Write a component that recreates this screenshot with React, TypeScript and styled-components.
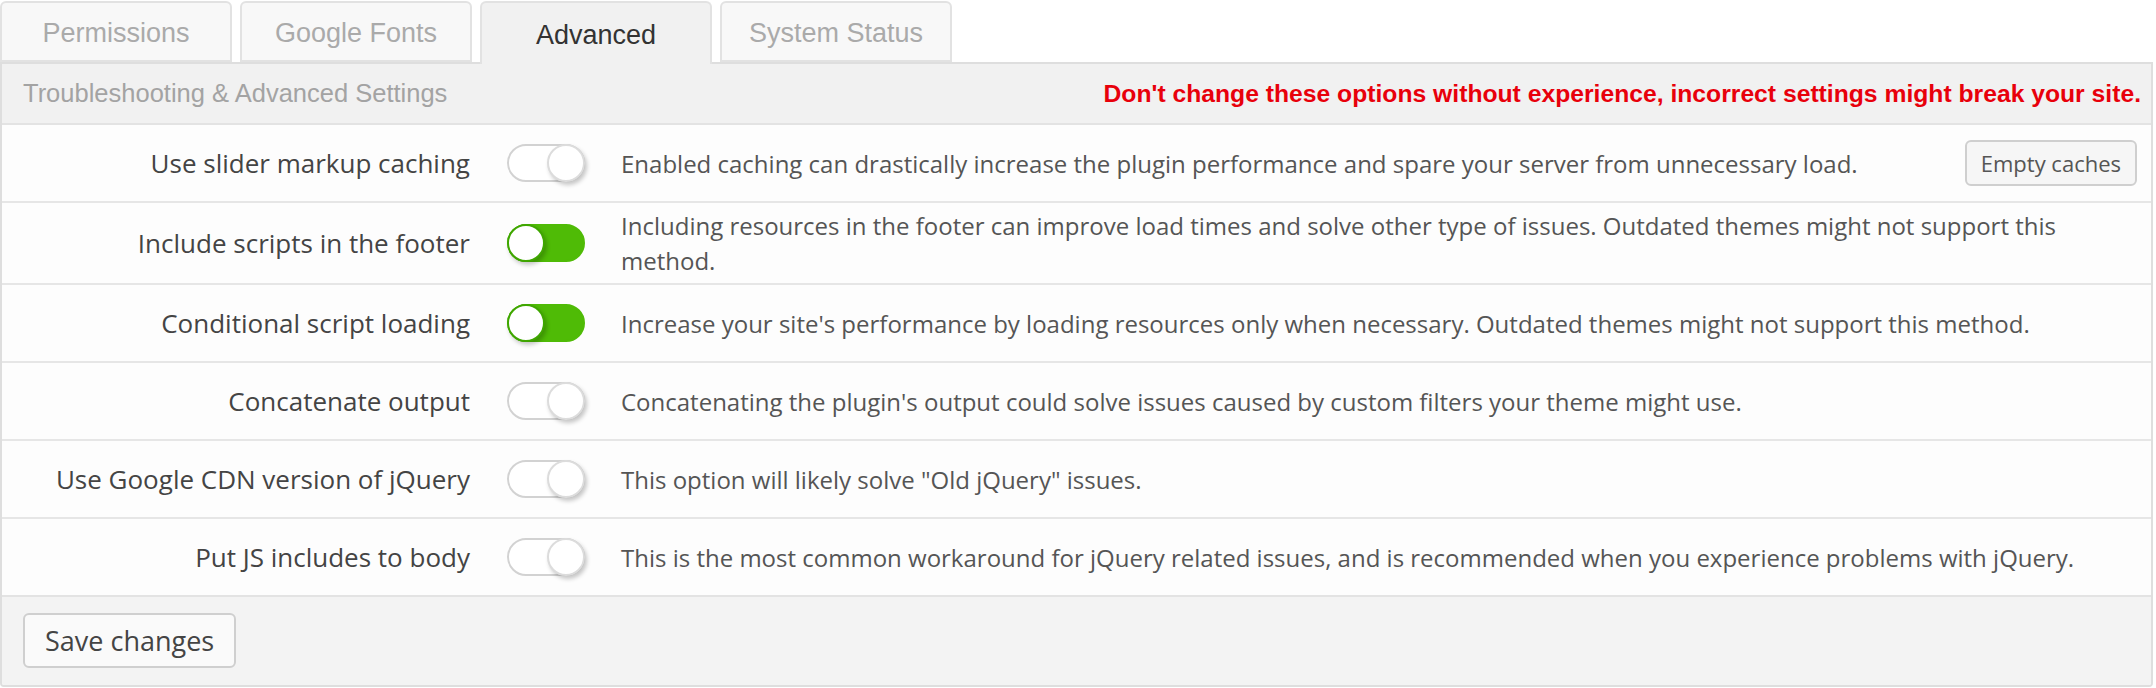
import React from 'react';
import styled, { createGlobalStyle } from 'styled-components';

const GlobalStyle = createGlobalStyle`
  html, body {
    margin: 0;
    padding: 0;
    background: #ffffff;
  }
`;

const Page = styled.div`
  width: 2153px;
  padding-top: 1px;
  font-family: 'Open Sans', 'Liberation Sans', sans-serif;
`;

const Tabs = styled.div`
  display: flex;
  gap: 8px;
  position: relative;
  z-index: 1;
`;

const Tab = styled.div<{ active?: boolean }>`
  width: 232px;
  height: ${p => (p.active ? '63px' : '61px')};
  box-sizing: border-box;
  display: flex;
  align-items: center;
  justify-content: center;
  border: 2px solid #e2e2e2;
  border-bottom: ${p => (p.active ? 'none' : '2px solid #e2e2e2')};
  border-radius: 6px 6px 0 0;
  background: ${p => (p.active ? '#f1f1f1' : '#f8f8f8')};
  color: ${p => (p.active ? '#333' : '#aaa')};
  font-family: 'Liberation Sans', Arial, sans-serif;
  font-size: 27px;
  padding-top: 3px;
`;

const Panel = styled.div`
  border: 2px solid #dedede;
  border-radius: 0 0 4px 4px;
  margin-top: -2px;
  overflow: hidden;
`;

const Header = styled.div`
  height: 59px;
  display: flex;
  align-items: center;
  justify-content: space-between;
  padding: 0 10px 0 21px;
  background: #f1f1f1;
  border-bottom: 2px solid #e3e3e3;
  font-family: 'Liberation Sans', Arial, sans-serif;
`;

const HeaderTitle = styled.span`
  color: #a3a3a3;
  font-size: 25.5px;
`;

const Warning = styled.span`
  color: #e8000b;
  font-size: 24.7px;
  font-weight: bold;
`;

const Row = styled.div`
  display: flex;
  align-items: center;
  min-height: 76px;
  background: #fdfdfd;
  & + & {
    border-top: 2px solid #e6e6e6;
  }
`;

const Label = styled.div`
  width: 468px;
  flex-shrink: 0;
  text-align: right;
  color: #444;
  font-size: 26px;
`;

const ToggleCell = styled.div`
  padding: 0 36px 0 37px;
  display: flex;
  align-items: center;
`;

const Track = styled.div<{ on?: boolean }>`
  width: 78px;
  height: 38px;
  box-sizing: border-box;
  border-radius: 19px;
  border: 2px solid ${p => (p.on ? '#4fbb06' : '#d2d2d2')};
  background: ${p => (p.on ? '#4fbb06' : '#ffffff')};
  display: flex;
  justify-content: ${p => (p.on ? 'flex-start' : 'flex-end')};
  align-items: center;
`;

const Knob = styled.div<{ on?: boolean }>`
  width: 38px;
  height: 38px;
  margin: ${p => (p.on ? '0 0 0 -2px' : '0 -2px 0 0')};
  box-sizing: border-box;
  border-radius: 50%;
  background: #fff;
  border: 2px solid ${p => (p.on ? '#3fa600' : '#dcdcdc')};
  box-shadow: 2px 3px 4px rgba(0, 0, 0, 0.22);
`;

const Desc = styled.div`
  flex: 1;
  display: flex;
  align-items: center;
  padding: 5px 14px 5px 0;
  color: #555;
  font-size: 24px;
  line-height: 35px;
`;

const DescText = styled.div`
  flex: 1;
`;

const SmallButton = styled.button`
  height: 46px;
  padding: 0 14px;
  margin-left: 20px;
  border: 2px solid #cfcfcf;
  border-radius: 6px;
  background: #f6f6f6;
  color: #555;
  font-family: 'Open Sans', sans-serif;
  font-size: 22px;
`;

const Footer = styled.div`
  background: #f3f3f3;
  border-top: 2px solid #e3e3e3;
  padding: 16px 21px 17px;
`;

const SaveButton = styled.button`
  height: 55px;
  padding: 0 20px;
  border: 2px solid #cfcfcf;
  border-radius: 6px;
  background: #fafafa;
  color: #444;
  font-family: 'Open Sans', sans-serif;
  font-size: 27px;
`;

const Toggle: React.FC<{ on?: boolean }> = ({ on }) => (
  <Track on={on}>
    <Knob on={on} />
  </Track>
);

const settings = [
  {
    label: 'Use slider markup caching',
    on: false,
    desc: 'Enabled caching can drastically increase the plugin performance and spare your server from unnecessary load.',
    button: 'Empty caches',
  },
  {
    label: 'Include scripts in the footer',
    on: true,
    desc: 'Including resources in the footer can improve load times and solve other type of issues. Outdated themes might not support this method.',
  },
  {
    label: 'Conditional script loading',
    on: true,
    desc: 'Increase your site\'s performance by loading resources only when necessary. Outdated themes might not support this method.',
  },
  {
    label: 'Concatenate output',
    on: false,
    desc: 'Concatenating the plugin\'s output could solve issues caused by custom filters your theme might use.',
  },
  {
    label: 'Use Google CDN version of jQuery',
    on: false,
    desc: 'This option will likely solve "Old jQuery" issues.',
  },
  {
    label: 'Put JS includes to body',
    on: false,
    desc: 'This is the most common workaround for jQuery related issues, and is recommended when you experience problems with jQuery.',
  },
];

const App: React.FC = () => {
  return (
    <Page>
      <GlobalStyle />
      <Tabs>
        <Tab>Permissions</Tab>
        <Tab>Google Fonts</Tab>
        <Tab active>Advanced</Tab>
        <Tab>System Status</Tab>
      </Tabs>
      <Panel>
        <Header>
          <HeaderTitle>Troubleshooting &amp; Advanced Settings</HeaderTitle>
          <Warning>Don't change these options without experience, incorrect settings might break your site.</Warning>
        </Header>
        {settings.map(s => (
          <Row key={s.label}>
            <Label>{s.label}</Label>
            <ToggleCell>
              <Toggle on={s.on} />
            </ToggleCell>
            <Desc>
              <DescText>{s.desc}</DescText>
              {s.button && <SmallButton>{s.button}</SmallButton>}
            </Desc>
          </Row>
        ))}
        <Footer>
          <SaveButton>Save changes</SaveButton>
        </Footer>
      </Panel>
    </Page>
  );
};

export default App;
